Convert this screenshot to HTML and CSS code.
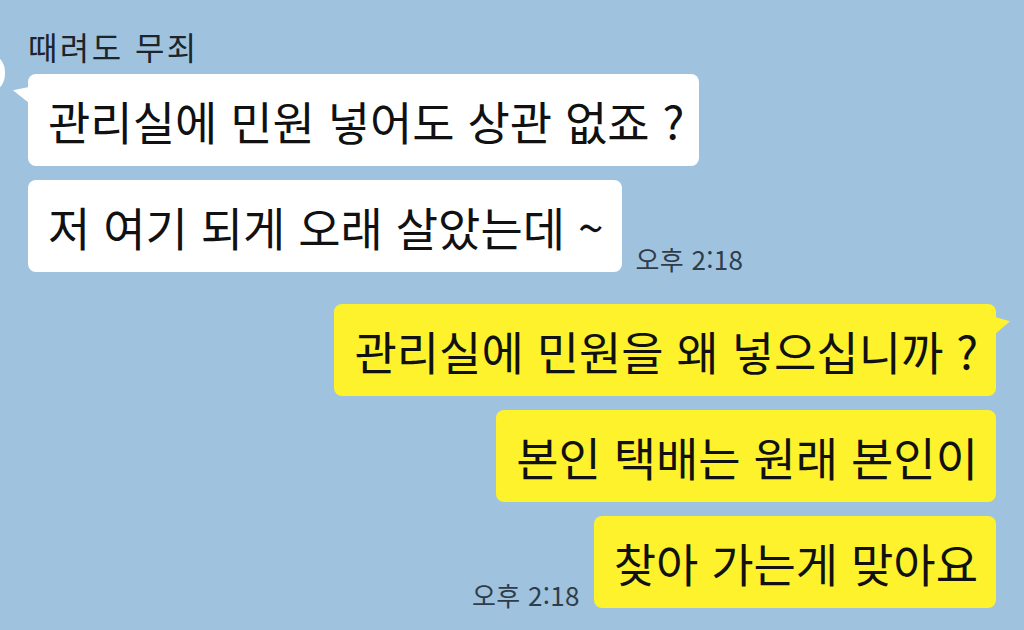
FILE: index.html
```html
<!DOCTYPE html>
<html lang="ko">
<head>
<meta charset="utf-8">
<title>Chat</title>
<link rel="stylesheet" href="styles.css">
</head>
<body>
<div class="chat">
  <div class="avatar"></div>
  <div class="name">때려도 무죄</div>
  <div class="row left">
    <div class="bubble white tail-left">관리실에 민원 넣어도 상관 없죠 ?</div>
  </div>
  <div class="row left">
    <div class="bubble white">저 여기 되게 오래 살았는데 ~</div>
    <div class="time">오후 2:18</div>
  </div>
  <div class="row right first-right">
    <div class="bubble yellow tail-right">관리실에 민원을 왜 넣으십니까 ?</div>
  </div>
  <div class="row right">
    <div class="bubble yellow">본인 택배는 원래 본인이</div>
  </div>
  <div class="row right">
    <div class="time">오후 2:18</div>
    <div class="bubble yellow">찾아 가는게 맞아요</div>
  </div>
</div>
</body>
</html>
```
FILE: styles.css
```css
html, body {
  margin: 0;
  padding: 0;
}
body {
  width: 1024px;
  height: 630px;
  overflow: hidden;
  background: #9fc3df;
  font-family: "Noto Sans CJK KR", "Noto Sans", sans-serif;
  color: #111;
}
.chat {
  position: relative;
  display: flex;
  flex-direction: column;
  padding: 26px 28px 0 28px;
  gap: 14px;
}
.avatar {
  position: absolute;
  left: -59px;
  top: 52px;
  width: 64px;
  height: 42px;
  border-radius: 20px;
  background: #fff;
}
.name {
  font-size: 32px;
  line-height: 40px;
  color: #1c252c;
  margin-bottom: -6px;
  letter-spacing: 2.4px;
}
.row {
  display: flex;
  align-items: flex-end;
  gap: 14px;
}
.row.right {
  justify-content: flex-end;
}
.first-right {
  margin-top: 18px;
}
.bubble {
  position: relative;
  font-size: 46px;
  line-height: 52px;
  padding: 20px 18px 20px 20px;
  border-radius: 8px;
  white-space: nowrap;
}
.white {
  background: #fff;
}
.white.tail-left {
  padding-right: 15px;
}
.yellow {
  background: #fdf22c;
}
.tail-left::before {
  content: "";
  position: absolute;
  left: -15px;
  top: 13px;
  width: 16px;
  height: 16px;
  background: #fff;
  clip-path: polygon(100% 0, 0 20%, 100% 100%);
}
.tail-right::after {
  content: "";
  position: absolute;
  right: -14px;
  top: 13px;
  width: 15px;
  height: 17px;
  background: #fdf22c;
  clip-path: polygon(0 0, 100% 25%, 0 100%);
}
.time {
  font-size: 26px;
  line-height: 28px;
  color: #2f3d4a;
  margin-bottom: -1px;
  letter-spacing: 0.3px;
  white-space: nowrap;
}
```
